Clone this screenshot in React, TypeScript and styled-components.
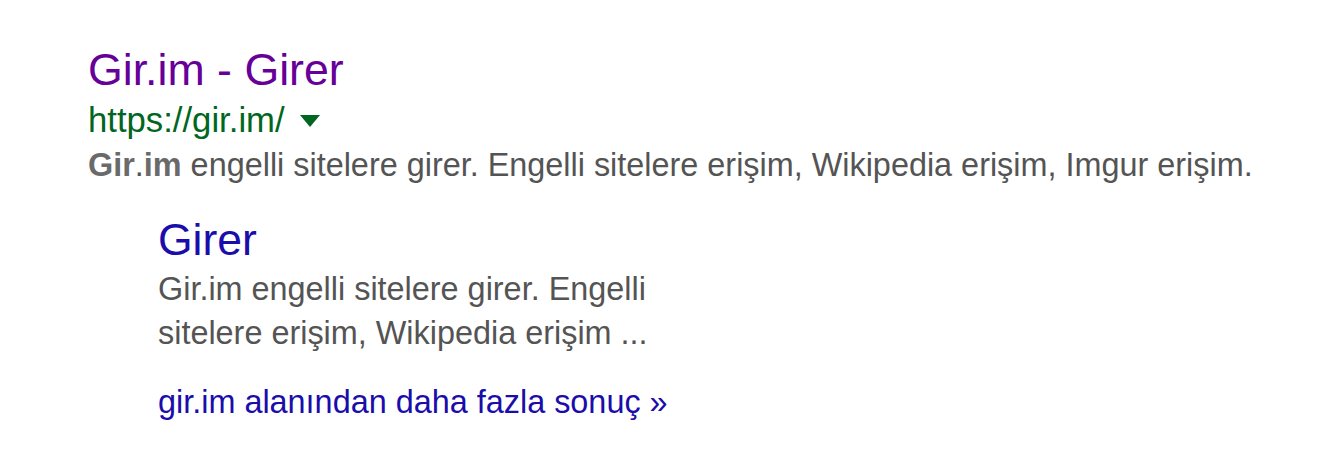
import styled, { createGlobalStyle } from 'styled-components';

const GlobalStyle = createGlobalStyle`
  html, body {
    margin: 0;
    padding: 0;
    background: #ffffff;
  }
  body {
    font-family: 'Liberation Sans', Arial, sans-serif;
  }
`;

const Page = styled.div`
  padding: 42px 0 0 88px;
`;

const Result = styled.div`
  display: flex;
  flex-direction: column;
  align-items: flex-start;
`;

const Title = styled.a`
  font-size: 44.7px;
  line-height: 56px;
  color: #660099;
  text-decoration: none;
  white-space: nowrap;
`;

const UrlRow = styled.div`
  display: flex;
  align-items: center;
  gap: 15px;
  margin: 2px 0 4px;
  height: 40px;
`;

const Url = styled.cite`
  font-style: normal;
  font-size: 34.7px;
  line-height: 40px;
  color: #006621;
`;

const DropArrow = styled.span`
  width: 0;
  height: 0;
  border-top: 12px solid #006621;
  border-left: 10px solid transparent;
  border-right: 10px solid transparent;
  margin-top: 2px;
`;

const Snippet = styled.div<{ $width?: number }>`
  font-size: 32.4px;
  line-height: 43.4px;
  color: #545454;
  max-width: ${(p) => (p.$width ? `${p.$width}px` : 'none')};
  white-space: ${(p) => (p.$width ? 'normal' : 'nowrap')};

  b {
    color: #6a6a6a;
  }
`;

const Sitelinks = styled.div`
  display: flex;
  flex-direction: column;
  align-items: flex-start;
  padding-left: 70px;
  margin-top: 29px;
`;

const SubTitle = styled.a`
  font-size: 44.5px;
  line-height: 48px;
  color: #1a0dab;
  text-decoration: none;
  margin-bottom: 4px;
`;

const MoreLink = styled.a`
  font-size: 32.4px;
  line-height: 43px;
  color: #1a0dab;
  text-decoration: none;
  margin-top: 26px;
`;

export default function App() {
  return (
    <>
      <GlobalStyle />
      <Page>
        <Result>
          <Title href='#'>Gir.im - Girer</Title>
          <UrlRow>
            <Url>https://gir.im/</Url>
            <DropArrow />
          </UrlRow>
          <Snippet>
            <b>Gir</b>.<b>im</b> engelli sitelere girer. Engelli sitelere erişim, Wikipedia erişim, Imgur erişim.
          </Snippet>
        </Result>
        <Sitelinks>
          <SubTitle href='#'>Girer</SubTitle>
          <Snippet $width={520}>
            Gir.im engelli sitelere girer. Engelli sitelere erişim, Wikipedia erişim ...
          </Snippet>
          <MoreLink href='#'>gir.im alanından daha fazla sonuç »</MoreLink>
        </Sitelinks>
      </Page>
    </>
  );
}
